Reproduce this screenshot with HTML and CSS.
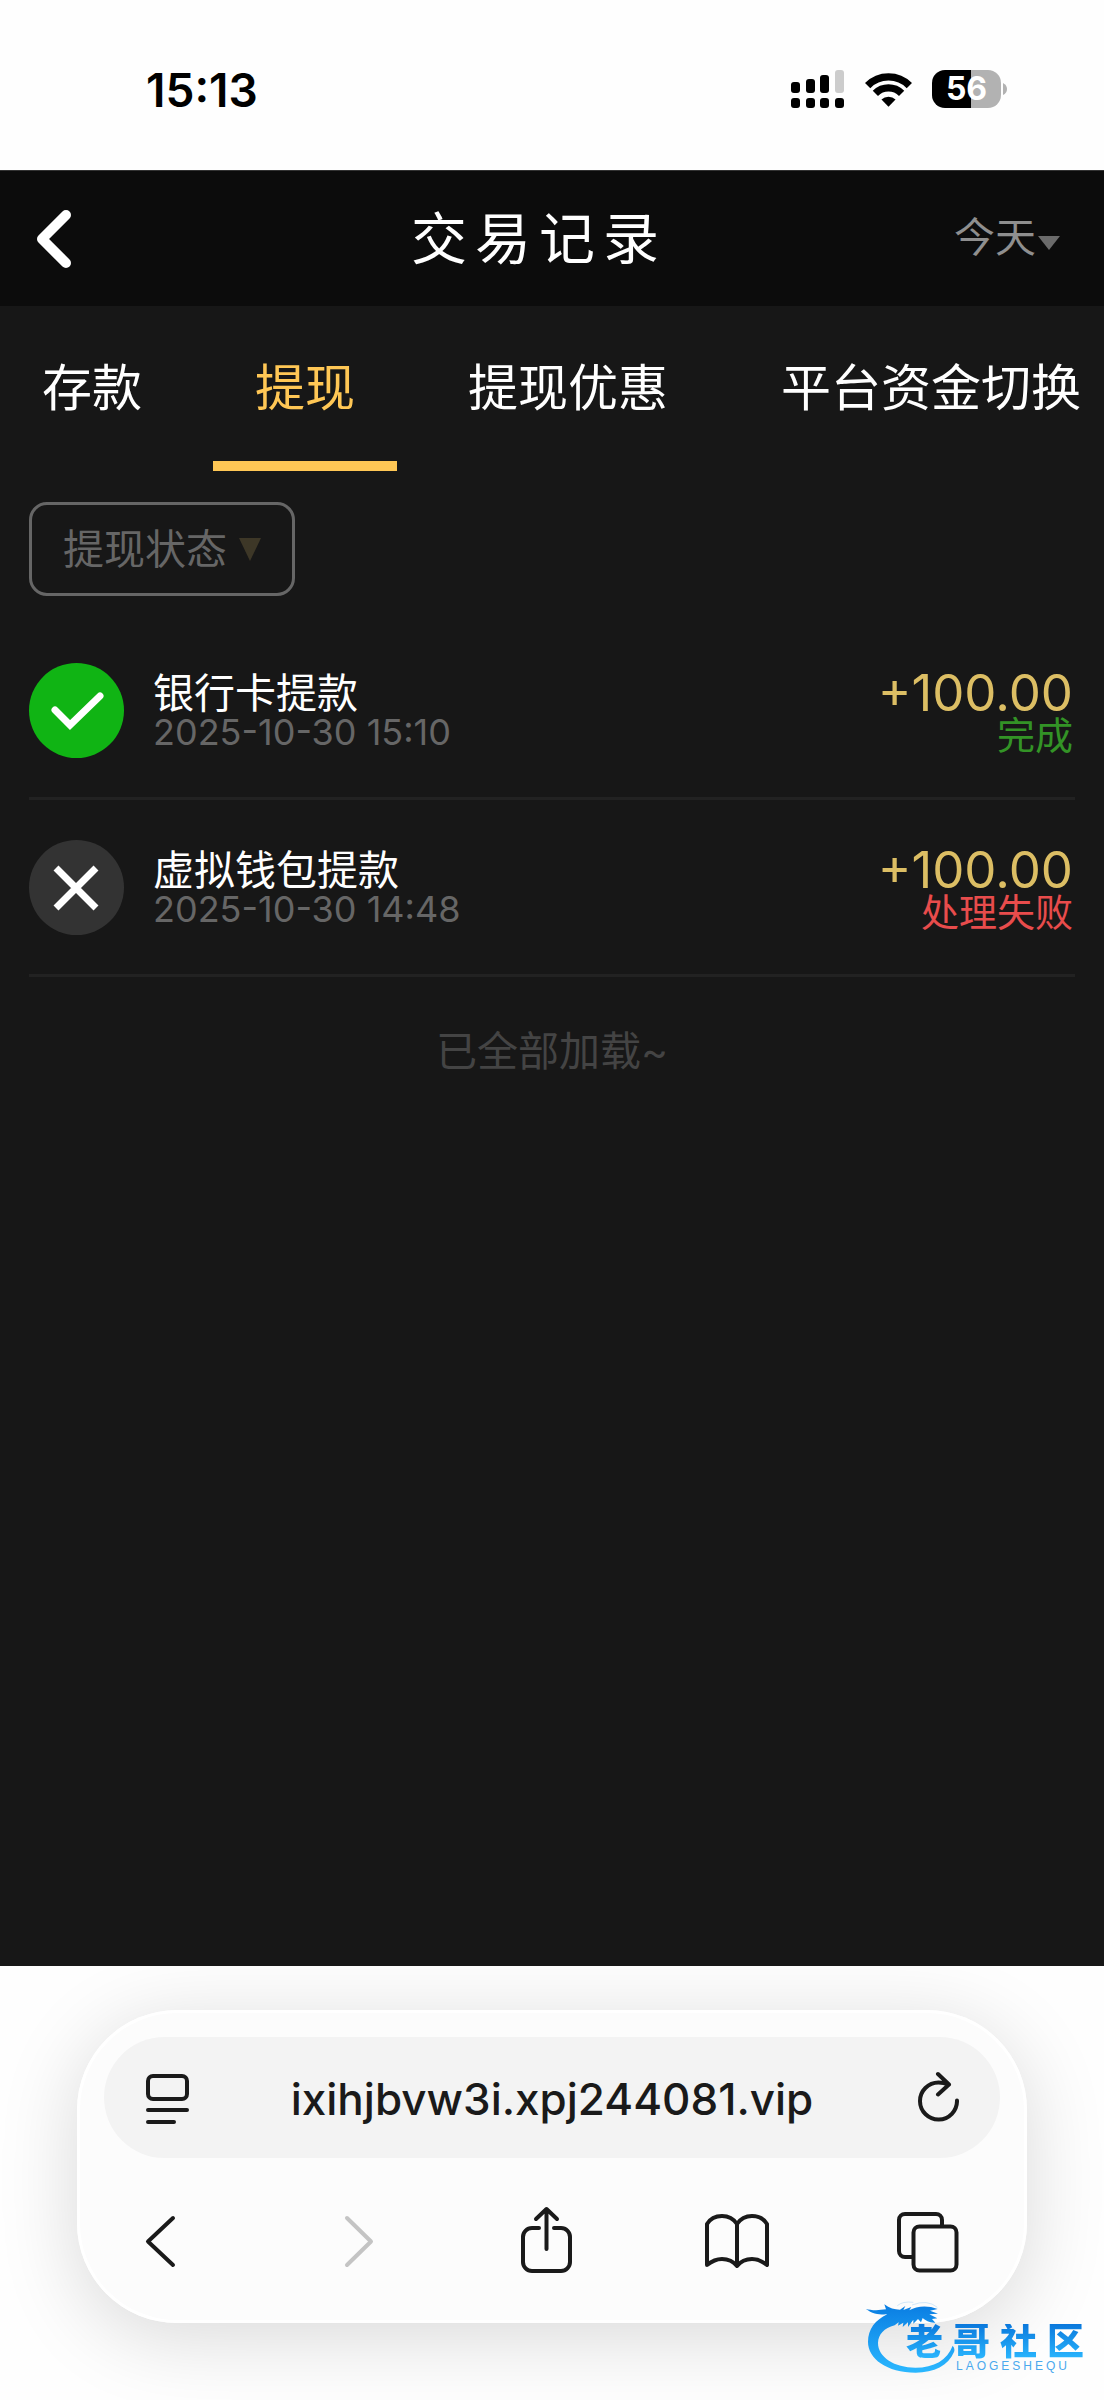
FILE: index.html
```html
<!DOCTYPE html>
<html lang="zh-CN">
<head>
<meta charset="utf-8">
<meta name="viewport" content="width=device-width, initial-scale=1">
<title>交易记录</title>
<link rel="stylesheet" href="styles.css">
</head>
<body>
<div class="status-bar">
  <time class="clock">15:13</time>
  <div class="indicators">
    <svg class="signal" viewBox="0 0 54 38" aria-hidden="true">
      <rect x="0" y="12" width="9" height="11" rx="3"/>
      <rect x="15" y="9" width="9" height="14" rx="3"/>
      <rect x="29" y="5" width="9" height="18" rx="3"/>
      <rect x="44" y="0" width="9" height="23" rx="3" fill="#ccc"/>
      <rect x="0" y="28" width="9" height="10" rx="3"/>
      <rect x="15" y="28" width="9" height="10" rx="3"/>
      <rect x="29" y="28" width="9" height="10" rx="3"/>
      <rect x="44" y="28" width="9" height="10" rx="3"/>
    </svg>
    <svg class="wifi" viewBox="0 0 48 36" aria-hidden="true">
      <g fill="none" stroke="#000" stroke-width="7.6">
        <path d="M2.700 14.500A30 30 0 0 1 45.300 14.500"/>
        <path d="M10.600 22.400A19 19 0 0 1 37.400 22.400"/>
      </g>
      <path d="M24 36L16.800 28.800A10.200 10.200 0 0 1 31.200 28.800Z"/>
    </svg>
    <div class="battery">
      <span class="battery-level">56</span>
      <svg class="battery-tip" viewBox="0 0 4 12" aria-hidden="true"><path d="M0 0Q4 2 4 6T0 12Z" fill="#b2b2b2"/></svg>
    </div>
  </div>
</div>

<main class="page">
  <header class="page-header">
    <button class="back" type="button" aria-label="返回">
      <svg viewBox="0 0 36 60" aria-hidden="true"><path d="M30 6L6 30L30 54"/></svg>
    </button>
    <h1 class="page-title">交易记录</h1>
    <label class="date-filter">
      <select aria-label="日期"><option>今天</option></select>
      <svg viewBox="0 0 22 14" aria-hidden="true"><path d="M0 0H22L11 14Z"/></svg>
    </label>
  </header>

  <nav class="tabs">
    <a class="tab" href="#deposit">存款</a>
    <a class="tab is-active" href="#withdraw" aria-current="page">提现</a>
    <a class="tab" href="#bonus">提现优惠</a>
    <a class="tab" href="#transfer">平台资金切换</a>
  </nav>

  <section class="records">
    <label class="state-filter">
      <select aria-label="提现状态"><option>提现状态</option></select>
      <svg viewBox="0 0 22 23" aria-hidden="true"><path d="M0 0H22L11 23Z"/></svg>
    </label>

    <ul class="record-list">
      <li class="record">
        <svg class="record-icon" viewBox="0 0 95 95" aria-hidden="true">
          <circle cx="47.500" cy="47.500" r="47.500" fill="#10b414"/>
          <path d="M26 47L41 62L71 33" fill="none" stroke="#fff" stroke-width="7" stroke-linecap="round"/>
        </svg>
        <div class="record-info">
          <p class="record-name">银行卡提款</p>
          <time class="record-time">2025-10-30 15:10</time>
        </div>
        <div class="record-result">
          <p class="amount">+100.00</p>
          <p class="state state-done">完成</p>
        </div>
      </li>
      <li class="record">
        <svg class="record-icon" viewBox="0 0 95 95" aria-hidden="true">
          <circle cx="47.500" cy="47.500" r="47.500" fill="#333"/>
          <path d="M27 28L67 68M67 28L27 68" fill="none" stroke="#fff" stroke-width="7"/>
        </svg>
        <div class="record-info">
          <p class="record-name">虚拟钱包提款</p>
          <time class="record-time">2025-10-30 14:48</time>
        </div>
        <div class="record-result">
          <p class="amount">+100.00</p>
          <p class="state state-failed">处理失败</p>
        </div>
      </li>
    </ul>
    <p class="list-end">已全部加载~</p>
  </section>
</main>

<footer class="browser">
  <div class="browser-panel">
    <div class="address-bar">
      <button class="address-button" type="button" aria-label="页面菜单">
        <svg viewBox="0 0 44 54" aria-hidden="true"><rect x="3" y="5" width="39" height="23" rx="5"/><path d="M3 39H42M3 51H29"/></svg>
      </button>
      <input class="address" type="text" aria-label="网址" value="ixihjbvw3i.xpj244081.vip">
      <button class="address-button" type="button" aria-label="刷新">
        <svg viewBox="0 0 44 54" aria-hidden="true"><path d="M42 29.500A18.500 18.500 0 1 1 23.500 11.500Q29 11.500 33 13.500M23 3L34 13.500L23 23.500"/></svg>
      </button>
    </div>
    <div class="toolbar">
      <button class="tool" type="button" aria-label="后退">
        <svg viewBox="0 0 64 70" aria-hidden="true"><path d="M45 12L20 35.500L45 59"/></svg>
      </button>
      <button class="tool" type="button" aria-label="前进" disabled>
        <svg viewBox="0 0 64 70" aria-hidden="true"><path d="M27 12L51 35.500L27 59"/></svg>
      </button>
      <button class="tool" type="button" aria-label="分享">
        <svg viewBox="0 0 64 70" aria-hidden="true"><path d="M27 22H20a9 9 0 0 0-9 9V56a9 9 0 0 0 9 9H49a9 9 0 0 0 9-9V31a9 9 0 0 0-9-9H42M34.500 43V3M24 13L34.500 3L45 13"/></svg>
      </button>
      <button class="tool" type="button" aria-label="书签">
        <svg viewBox="0 0 64 70" aria-hidden="true"><path d="M33 18C29 12 24 10 18 10C12 10 6 13 3 18V59C8 55 13 53 18 53C24 53 29 55 33 60C37 55 42 53 48 53C53 53 58 55 63 59V18C60 13 54 10 48 10C42 10 37 12 33 18V60"/></svg>
      </button>
      <button class="tool" type="button" aria-label="标签页">
        <svg viewBox="0 0 64 70" aria-hidden="true"><rect x="17.500" y="20.500" width="43" height="44" rx="6"/><path d="M46 20V14a6 6 0 0 0-6-6H9a6 6 0 0 0-6 6V45a6 6 0 0 0 6 6H17"/></svg>
      </button>
    </div>
  </div>

  <div class="brand">
    <svg class="brand-dragon" viewBox="45 25 270 225" aria-hidden="true">
      <defs>
        <linearGradient id="brand-blue" x1="0" y1="0" x2="0" y2="1">
          <stop offset="0" stop-color="#0a7de2"/>
          <stop offset="1" stop-color="#2bb8ff"/>
        </linearGradient>
      </defs>
      <path fill="url(#brand-blue)" d="M47 57C62 62 82 63 108 59L103 44C118 56 134 60 150 60L166 49L160 61L184 52L178 62C200 49 232 46 263 58L240 63L264 72L238 74L262 86L246 88L256 99C238 100 228 93 218 85L213 98L204 88L190 102L190 90L174 112L174 98L158 112L160 99L144 108L146 98L134 107C102 116 85 134 84 160C84 203 134 234 196 234C252 234 292 211 308 168Q316 176 312 187C295 228 252 249 197 249C110 249 54 207 54 157C54 118 76 91 112 74C91 75 68 74 47 57Z"/>
      <path fill="none" stroke="#b9dcf8" stroke-width="2" d="M142 48Q158 34 190 38M186 46Q232 28 262 53"/>
    </svg>
    <div class="brand-words">
      <span class="brand-name">老哥社区</span>
      <span class="brand-latin">LAOGESHEQU</span>
    </div>
  </div>
</footer>
</body>
</html>
```
FILE: styles.css
```css
* {
  box-sizing: border-box;
}

body {
  margin: 0;
  min-height: 100vh;
  display: flex;
  flex-direction: column;
  background: #fefefe;
  font-family: Inter, "Noto Sans CJK SC", sans-serif;
}

h1, p, ul {
  margin: 0;
  padding: 0;
  font-weight: 400;
}

button, select, input {
  margin: 0;
  padding: 0;
  border: 0;
  background: none;
  color: inherit;
  font: inherit;
}

select {
  appearance: none;
}

svg {
  display: block;
  flex: none;
}

/* Phone status bar */
.status-bar {
  display: flex;
  align-items: center;
  justify-content: space-between;
  height: 170px;
  padding: 8px 97px 0 146px;
}

.clock {
  padding-top: 2px;
  font-size: 46px;
  font-weight: 600;
  line-height: 56px;
}

.indicators {
  display: flex;
  align-items: center;
  gap: 20px;
}

.signal {
  width: 54px;
  height: 38px;
}

.wifi {
  width: 47px;
  height: 36px;
}

.battery {
  display: flex;
  align-items: center;
  gap: 2px;
}

.battery-level {
  width: 69px;
  border-radius: 13px;
  background: linear-gradient(90deg, #000 56%, #b2b2b2 56%);
  color: #fff;
  font-size: 32px;
  font-weight: 700;
  line-height: 38px;
  text-align: center;
}

.battery-tip {
  width: 4px;
  height: 12px;
}

/* Page */
.page {
  flex: 1;
  background: #171717;
  color: #fff;
}

.page-header {
  display: flex;
  align-items: center;
  height: 136px;
  border-top: 1px solid #333;
  background: #0c0c0c;
}

.back {
  width: 124px;
  padding-left: 36px;
}

.back svg {
  width: 36px;
  height: 60px;
  fill: none;
  stroke: #fff;
  stroke-width: 10;
  stroke-linecap: round;
  stroke-linejoin: round;
}

.page-title {
  flex: 1;
  font-size: 56px;
  line-height: 64px;
  letter-spacing: 8px;
  text-align: center;
}

.date-filter {
  display: flex;
  align-items: center;
  gap: 2px;
  padding: 0 44px 4px 0;
  color: #8f8f8f;
  font-size: 41px;
  line-height: 48px;
}

.date-filter svg {
  width: 22px;
  height: 14px;
  margin-top: 12px;
  fill: #6b6b6b;
}

.tabs {
  display: flex;
  gap: 29px;
  overflow: hidden;
}

.tab {
  flex: none;
  padding: 52px 42px 43px;
  border-bottom: 10px solid transparent;
  color: #fff;
  font-size: 50px;
  line-height: 60px;
  text-decoration: none;
}

.tab.is-active {
  border-color: #ffc755;
  color: #ffc755;
}

.records {
  padding: 31px 29px;
}

.state-filter {
  display: inline-flex;
  align-items: center;
  gap: 12px;
  height: 94px;
  padding: 0 31px;
  border: 3px solid #666;
  border-radius: 18px;
  color: #666;
  font-size: 41px;
  line-height: 48px;
}

.state-filter svg {
  width: 22px;
  height: 23px;
  fill: #3d3727;
}

.record-list {
  margin-top: 27px;
  list-style: none;
}

.record {
  display: flex;
  align-items: center;
  gap: 29px;
  height: 177px;
  border-bottom: 3px solid #222;
}

.record-icon {
  width: 95px;
  height: 95px;
}

.record-info {
  flex: 1;
}

.record-name {
  font-size: 41px;
  line-height: 44px;
}

.record-time {
  display: block;
  color: #666;
  font-size: 36px;
  line-height: 34px;
}

.record-result {
  padding-right: 2px;
  text-align: right;
}

.amount {
  color: #dcbe64;
  font-size: 51px;
  line-height: 50px;
}

.state {
  font-size: 38px;
  line-height: 34px;
}

.state-done {
  color: #339326;
}

.state-failed {
  color: #e84c4c;
}

.list-end {
  margin-top: 50px;
  color: #444;
  font-size: 41px;
  line-height: 48px;
  text-align: center;
}

/* Browser controls */
.browser {
  position: relative;
  padding: 44px 77px 77px;
  overflow: hidden;
}

.browser-panel {
  padding: 27px 27px 0;
  border-radius: 100px;
  background: #fcfcfc;
  box-shadow: inset 0 0 0 3px #fff, 0 14px 80px rgba(0, 0, 0, 0.15);
}

.address-bar {
  display: flex;
  align-items: center;
  height: 121px;
  padding: 0 41px;
  border-radius: 61px;
  background: #f3f3f3;
  color: #1a1a1a;
}

.address {
  flex: 1;
  min-width: 0;
  padding-top: 2px;
  font-size: 44px;
  font-weight: 500;
  line-height: 56px;
  text-align: center;
}

.address-button svg {
  width: 44px;
  height: 54px;
}

.toolbar {
  display: flex;
  align-items: center;
  justify-content: space-between;
  height: 165px;
  padding: 0 40px 0 24px;
  color: #1a1a1a;
}

.tool svg {
  width: 64px;
  height: 70px;
  overflow: visible;
}

.tool:disabled {
  color: #c4c4c4;
}

.tool svg,
.address-button svg {
  fill: none;
  stroke: currentColor;
  stroke-width: 4;
  stroke-linecap: round;
  stroke-linejoin: round;
}

/* Community mark laid over the corner */
.brand {
  position: absolute;
  right: 10px;
  bottom: 22px;
  width: 229px;
  height: 80px;
}

.brand-dragon {
  width: 90px;
  height: 75px;
}

.brand-words {
  position: absolute;
  top: 26px;
  left: 41px;
  display: flex;
  flex-direction: column;
}

.brand-name {
  background: linear-gradient(#0a78dc, #2bb8ff);
  background-clip: text;
  color: transparent;
  font-size: 37px;
  font-weight: 900;
  line-height: 36px;
  letter-spacing: 10px;
}

.brand-latin {
  padding-left: 50px;
  color: #4aa9ee;
  font-family: "Liberation Sans", sans-serif;
  font-size: 12px;
  line-height: 12px;
  letter-spacing: 3px;
}
```
